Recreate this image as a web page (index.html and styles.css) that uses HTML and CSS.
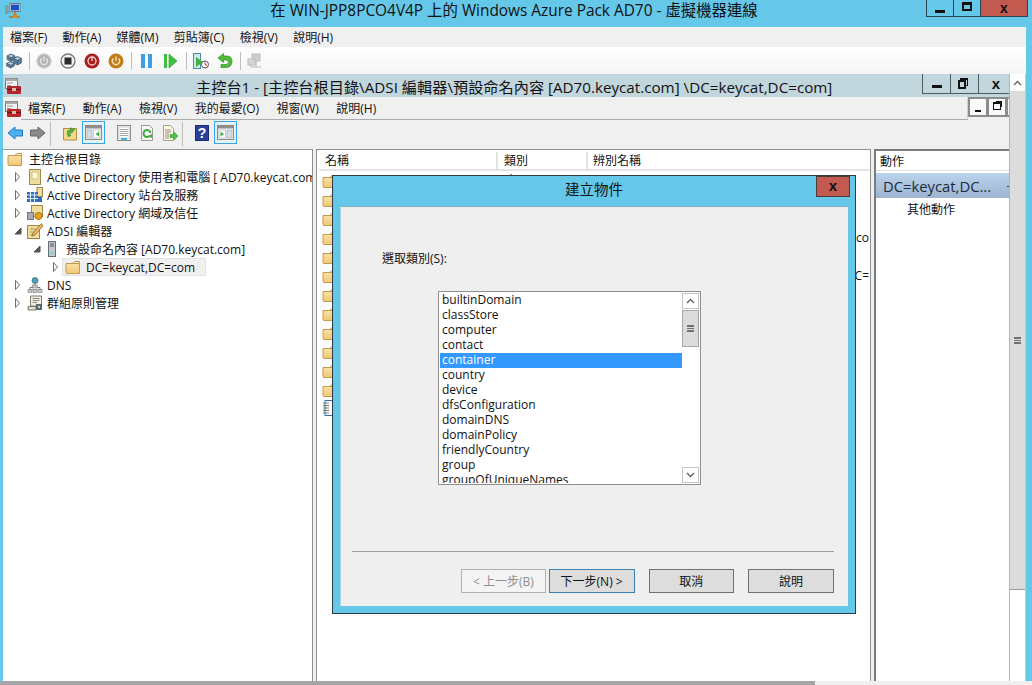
FILE: index.html
```html
<!DOCTYPE html>
<html lang="zh-Hant">
  <head>
    <meta charset="UTF-8" />
    <title>虛擬機器連線</title>
    <link rel="stylesheet" href="styles.css">
  </head>
  <body>
    <svg class="defs" width="0" height="0">
      <defs>
        <linearGradient id="folderfill" x1="0" y1="0" x2="0" y2="1">
          <stop offset="0" stop-color="#fbe6ac"/>
          <stop offset="1" stop-color="#f0c873"/>
        </linearGradient>
        <symbol id="folder" viewBox="0 0 16 14">
          <path d="M1 3.5 L1 12.5 Q1 13.5 2 13.5 L14.500 13.500 L14.500 1.500 L10 1.500 L8 3.500 Z" fill="url(#folderfill)" stroke="#c49a4e"/>
          <path d="M10 1.500 L14.500 1.500 L14.500 3.500 L8 3.500 Z" fill="#fff4d2" stroke="#c49a4e"/>
        </symbol>
        <symbol id="arrow-closed" viewBox="0 0 8 10">
          <path d="M1.500 .5 L5.500 5 L1.500 9.500 Z" fill="#fff" stroke="#6e6e6e"/>
        </symbol>
        <symbol id="arrow-open" viewBox="0 0 8 8">
          <path d="M7 1 L7 7 L1 7 Z" fill="#555" stroke="#555"/>
        </symbol>
        <symbol id="toolbox" viewBox="0 0 17 16">
          <rect x="1.500" y=".5" width="12" height="10" fill="#f3f3f3" stroke="#777"/>
          <rect x="1.500" y=".5" width="12" height="2.500" fill="#a9a9a9"/>
          <rect x="3" y="4.500" width="6" height="1" fill="#999"/>
          <rect x="3" y="7" width="4" height="1" fill="#999"/>
          <rect x="3" y="8" width="14" height="8" rx="1" fill="#b5262b"/>
          <rect x="3" y="11" width="14" height="1" fill="#6f1014"/>
          <rect x="8" y="10" width="4" height="3" fill="#e9b9a8"/>
        </symbol>
        <symbol id="chev-up" viewBox="0 0 9 6">
          <path d="M1 5 L4.500 1.500 L8 5" fill="none" stroke="#606060" stroke-width="1.300"/>
        </symbol>
        <symbol id="chev-down" viewBox="0 0 9 6">
          <path d="M1 1 L4.500 4.500 L8 1" fill="none" stroke="#606060" stroke-width="1.300"/>
        </symbol>
      </defs>
    </svg>

    <div class="vm">
      <header class="vm-title">
        <svg class="vm-icon" width="16" height="16" viewBox="0 0 16 16">
          <rect x="5" y=".5" width="10" height="8" fill="#fff" stroke="#777"/>
          <rect x="6" y="1.500" width="8" height="6" fill="#1b4fc4"/>
          <rect x="0" y="3" width="3" height="7" fill="#8aa" stroke="#667" stroke-width=".5"/>
          <path d="M10 9 V12 M4 14 H15 M10 12 V14" stroke="#b8741c" stroke-width="1.500"/>
          <rect x="8" y="11" width="4" height="4" fill="#d58a24"/>
        </svg>
        <div class="vm-caption">在 WIN-JPP8PCO4V4P 上的 Windows Azure Pack AD70 - 虛擬機器連線</div>
        <div class="win-buttons">
          <div class="win-btn win-min"><span class="glyph-min"></span></div>
          <div class="win-btn win-max"><span class="glyph-max"></span></div>
          <div class="win-btn win-close">x</div>
        </div>
      </header>

      <div class="vm-body">
        <nav class="menu vm-menu">
          <span>檔案(F)</span><span>動作(A)</span><span>媒體(M)</span><span>剪貼簿(C)</span><span>檢視(V)</span><span>說明(H)</span>
        </nav>

        <div class="vm-tools">
          <svg class="tool" width="16" height="16" viewBox="0 0 16 16">
            <path d="M5 1 L9 3 L5 5 L1 3 Z" fill="#b9ccd8" stroke="#3f5f78"/>
            <path d="M1 3 V6.500 L5 8.500 V5 Z M9 3 V6.500 L5 8.500 V5 Z" fill="#5c7d96" stroke="#3f5f78" stroke-width=".6"/>
            <path d="M11.500 3.500 L15.500 5.500 L11.500 7.500 L7.500 5.500 Z" fill="#b9ccd8" stroke="#3f5f78"/>
            <path d="M7.500 5.500 V10 L11.500 12 V7.500 Z M15.500 5.500 V10 L11.500 12 V7.500 Z" fill="#5c7d96" stroke="#3f5f78" stroke-width=".6"/>
            <path d="M4.500 8.500 L8.500 10.500 L4.500 12.500 L.5 10.500 Z" fill="#b9ccd8" stroke="#3f5f78"/>
            <path d="M.5 10.500 V13 L4.500 15 V12.500 Z M8.500 10.500 V13 L4.500 15 V12.500 Z" fill="#5c7d96" stroke="#3f5f78" stroke-width=".6"/>
          </svg>
          <i class="sep"></i>
          <svg class="tool" width="16" height="16" viewBox="0 0 16 16">
            <circle cx="8" cy="8" r="7.500" fill="#b4b4b4"/>
            <circle cx="8" cy="8" r="7" fill="none" stroke="#d8d8d8"/>
            <path d="M5.600 5.500 A3.500 3.500 0 1 0 10.400 5.500 M8 3.500 V8" fill="none" stroke="#e8e8e8" stroke-width="1.300"/>
          </svg>
          <svg class="tool" width="16" height="16" viewBox="0 0 16 16">
            <circle cx="8" cy="8" r="7" fill="#f2f2f2" stroke="#777" stroke-width="1.300"/>
            <rect x="4.500" y="4.500" width="7" height="7" fill="#2a2a2a"/>
          </svg>
          <svg class="tool" width="16" height="16" viewBox="0 0 16 16">
            <circle cx="8" cy="8" r="7.500" fill="#ac1d1d"/>
            <circle cx="8" cy="8" r="4" fill="none" stroke="#f4d5d5" stroke-width="1.300"/>
            <path d="M8 3.500 V8" stroke="#f4d5d5" stroke-width="1.300"/>
          </svg>
          <svg class="tool" width="16" height="16" viewBox="0 0 16 16">
            <circle cx="8" cy="8" r="7.500" fill="#c27d18"/>
            <path d="M5.400 5.500 A3.600 3.600 0 1 0 10.600 5.500 M8 3.500 V8" fill="none" stroke="#fbe9c4" stroke-width="1.300"/>
          </svg>
          <i class="sep"></i>
          <svg class="tool" width="16" height="16" viewBox="0 0 16 16">
            <rect x="3" y="1" width="4" height="14" fill="#3d9fe0"/>
            <rect x="10" y="1" width="4" height="14" fill="#3d9fe0"/>
          </svg>
          <svg class="tool" width="17" height="16" viewBox="0 0 17 16">
            <rect x="2" y="1" width="3" height="14" fill="#3cc03c"/>
            <path d="M7 1 L15 8 L7 15 Z" fill="#3cc03c" stroke="#2a9c2a" stroke-width=".6"/>
          </svg>
          <i class="sep"></i>
          <svg class="tool" width="16" height="16" viewBox="0 0 16 16">
            <rect x=".5" y=".5" width="7" height="15" fill="#cfe6ee" stroke="#4a8ea5"/>
            <path d="M3 4 L10 9 L3 14 Z" fill="#3cb43c"/>
            <circle cx="12" cy="11.500" r="3.500" fill="#fff" stroke="#555"/>
            <path d="M12 9.500 V11.500 L14 12.500" fill="none" stroke="#b52020"/>
          </svg>
          <svg class="tool" width="16" height="16" viewBox="0 0 16 16">
            <path d="M1 5 L6.500 .5 V3 H10 Q15.500 3.500 15 9 Q14.500 14.500 8.500 14.500 H4 V11.500 H9 Q11.500 11.500 11.500 9 Q11.500 7 9 7 H6.500 V9.500 Z" fill="#4fbf3a" stroke="#2c8f22" stroke-width=".7"/>
          </svg>
          <i class="sep"></i>
          <svg class="tool" width="16" height="16" viewBox="0 0 16 16" opacity=".55">
            <rect x="5" y="1" width="8" height="7" fill="#aaa" stroke="#888"/>
            <rect x="1" y="6" width="7" height="6" fill="#bbb" stroke="#888"/>
            <path d="M4 12 V14 H14 M9 8 V14" stroke="#888" fill="none"/>
          </svg>
        </div>

        <div class="console-row">
          <div class="console">
            <div class="console-title">
              <svg class="console-icon" width="17" height="16"><use href="#toolbox"/></svg>
              <div class="console-caption">主控台1 - [主控台根目錄\ADSI 編輯器\預設命名內容 [AD70.keycat.com] \DC=keycat,DC=com]</div>
              <div class="win-buttons console-buttons">
                <div class="win-btn win-min"><span class="glyph-min"></span></div>
                <div class="win-btn win-restore"><span class="glyph-back"></span><span class="glyph-front"></span></div>
                <div class="win-btn win-x">x</div>
              </div>
            </div>

            <div class="console-menu">
              <svg class="console-icon" width="17" height="16"><use href="#toolbox"/></svg>
              <nav class="menu inner-menu">
                <span>檔案(F)</span><span>動作(A)</span><span>檢視(V)</span><span>我的最愛(O)</span><span>視窗(W)</span><span>說明(H)</span>
              </nav>
              <div class="mdi-buttons">
                <div class="mdi-btn"><span class="mdi-min"></span></div>
                <div class="mdi-btn"><span class="mdi-restore"></span></div>
                <div class="mdi-btn"></div>
              </div>
            </div>

            <div class="console-tools">
              <div class="tool-group">
                <svg width="16" height="16" viewBox="0 0 16 16">
                  <path d="M1 8 L8 2 V5 H15.500 V11 H8 V14 Z" fill="#4eb1ee" stroke="#1d7cc4"/>
                </svg>
                <svg width="16" height="16" viewBox="0 0 16 16">
                  <path d="M15 8 L8 2 V5 H.5 V11 H8 V14 Z" fill="#8b8b8b" stroke="#666"/>
                </svg>
              </div>
              <i class="sep tool-sep"></i>
              <div class="tool-group tight">
                <svg width="16" height="16" viewBox="0 0 16 16">
                  <path d="M1.500 3.500 H14.500 V15 H1.500 Z" fill="#f3d98e" stroke="#b28f3e"/>
                  <path d="M5 11 V7 Q5 5 7 5 H9 V3 L13 5.500 L9 8.500 V7 H7.500 V11 Z" transform="rotate(-12 8 6)" fill="#55b847" stroke="#2e8c25" stroke-width=".6"/>
                </svg>
                <div class="tool-box">
                  <svg width="17" height="15" viewBox="0 0 17 15">
                    <rect x=".5" y=".5" width="16" height="14" fill="#f7f7f7" stroke="#8a8a8a"/>
                    <rect x="1" y="1" width="15" height="2.500" fill="#8e8e8e"/>
                    <rect x="2" y="5" width="5" height="8" fill="#d5dde4" stroke="#999" stroke-width=".5"/>
                    <rect x="8.500" y="5" width="6.500" height="8" fill="#fff" stroke="#999" stroke-width=".5"/>
                    <path d="M14 6.500 V11.500 L10.500 9 Z" fill="#3bb24a"/>
                  </svg>
                </div>
              </div>
              <div class="tool-group pages">
                <svg width="16" height="16" viewBox="0 0 16 16">
                  <rect x="1.500" y=".5" width="13" height="15" fill="#f4f4f4" stroke="#8c8c8c"/>
                  <rect x="3" y="2" width="10" height="11" fill="#fff" stroke="#aeb6bc" stroke-width=".6"/>
                  <path d="M4 4.500 H12 M4 6.500 H12 M4 8.500 H12 M4 10.500 H12" stroke="#a5a5a5"/>
                  <rect x="5" y="13" width="6" height="2" fill="#3fb4e6"/>
                </svg>
                <svg width="16" height="16" viewBox="0 0 16 16">
                  <path d="M2.500 .5 H10.500 L13.500 3.500 V15.500 H2.500 Z" fill="#f7f7f7" stroke="#9a9a9a"/>
                  <path d="M11.500 8 A3.500 3.500 0 1 0 10.500 11" fill="none" stroke="#3fa93f" stroke-width="2"/>
                  <path d="M9 11 L13 9 L13 13 Z" fill="#3fa93f"/>
                </svg>
                <svg width="16" height="16" viewBox="0 0 16 16">
                  <path d="M1.500 .5 H8.500 L11.500 3.500 V15.500 H1.500 Z" fill="#fbf6dc" stroke="#a2a08e"/>
                  <path d="M3 5 H9 M3 7 H9 M3 9 H7 M3 11 H7 M3 13 H7" stroke="#8f8f8f"/>
                  <path d="M8 9.500 H12 V7 L16 11 L12 15 V12.500 H8 Z" fill="#57c04c" stroke="#339128" stroke-width=".5"/>
                </svg>
              </div>
              <i class="sep tool-sep"></i>
              <div class="tool-group tight">
                <svg width="16" height="16" viewBox="0 0 16 16">
                  <rect x="1.500" y=".5" width="13" height="15" fill="#2b3f9b" stroke="#1c2b70"/>
                  <text class="help-mark" x="8" y="13" text-anchor="middle">?</text>
                </svg>
                <div class="tool-box">
                  <svg width="17" height="15" viewBox="0 0 17 15">
                    <rect x=".5" y=".5" width="16" height="14" fill="#f7f7f7" stroke="#8a8a8a"/>
                    <rect x="1" y="1" width="15" height="2.500" fill="#8e8e8e"/>
                    <rect x="2" y="5" width="6.500" height="8" fill="#fff" stroke="#999" stroke-width=".5"/>
                    <rect x="10" y="5" width="5" height="8" fill="#d5dde4" stroke="#999" stroke-width=".5"/>
                    <path d="M3.500 6.500 V11.500 L7 9 Z" fill="#3bb24a"/>
                  </svg>
                </div>
              </div>
            </div>

            <div class="panes">
              <aside class="tree">
                <div class="node">
                  <svg class="node-icon root-icon" width="16" height="14"><use href="#folder"/></svg>
                  <span class="root-label">主控台根目錄</span>
                </div>
                <div class="node">
                  <svg class="twisty" width="8" height="10"><use href="#arrow-closed"/></svg>
                  <svg class="node-icon" width="16" height="16" viewBox="0 0 16 16">
                    <rect x="2.500" y=".5" width="11" height="15" fill="#f0dd9e" stroke="#9c8a4c"/>
                    <rect x="5" y="3" width="6" height="7" fill="#fff6d0" stroke="#b3a469" stroke-width=".6"/>
                  </svg>
                  <span>Active Directory 使用者和電腦 [ AD70.keycat.com]</span>
                </div>
                <div class="node">
                  <svg class="twisty" width="8" height="10"><use href="#arrow-closed"/></svg>
                  <svg class="node-icon" width="16" height="16" viewBox="0 0 16 16">
                    <rect x="10" y=".5" width="5.500" height="9" fill="#f0dd9e" stroke="#9c8a4c"/>
                    <rect x="0" y="5" width="11" height="10" fill="#2f6fbe"/>
                    <path d="M0 8 H11 M3.500 5 V15 M7.500 5 V15 M0 11.500 H11" stroke="#e4eef8"/>
                    <rect x="11" y="10" width="4" height="5" fill="#2f6fbe"/>
                  </svg>
                  <span>Active Directory 站台及服務</span>
                </div>
                <div class="node">
                  <svg class="twisty" width="8" height="10"><use href="#arrow-closed"/></svg>
                  <svg class="node-icon" width="16" height="16" viewBox="0 0 16 16">
                    <rect x="4.500" y=".5" width="11" height="11" fill="#f0dd9e" stroke="#9c8a4c"/>
                    <rect x="0" y="7" width="7" height="8" fill="#6d7a85"/>
                    <path d="M1 9 H6 M1 11 H6 M1 13 H6" stroke="#d5dde4"/>
                    <circle cx="11.500" cy="11" r="3.500" fill="#e3a21a" stroke="#a8720c"/>
                  </svg>
                  <span>Active Directory 網域及信任</span>
                </div>
                <div class="node">
                  <svg class="twisty" width="8" height="8"><use href="#arrow-open"/></svg>
                  <svg class="node-icon" width="16" height="16" viewBox="0 0 16 16">
                    <rect x=".5" y="2.500" width="12" height="13" fill="#f0dd9e" stroke="#9c8a4c"/>
                    <path d="M3 6 H9 M3 9 H7 M3 12 H6" stroke="#a89a63"/>
                    <path d="M14.500 .5 L6 10 L5 13 L8 12 L16 3 Z" fill="#f5b45a" stroke="#7b5a2e" stroke-width=".7"/>
                  </svg>
                  <span>ADSI 編輯器</span>
                </div>
                <div class="node lvl1">
                  <svg class="twisty" width="8" height="8"><use href="#arrow-open"/></svg>
                  <svg class="node-icon server-icon" width="12" height="16" viewBox="0 0 12 16">
                    <rect x="2.500" y=".5" width="7" height="15" fill="#c4c8cc" stroke="#6a6f74"/>
                    <path d="M4 3 H8 M4 5 H8" stroke="#55595e"/>
                    <rect x="4" y="11" width="4" height="2" fill="#7fd0e8"/>
                  </svg>
                  <span>預設命名內容 [AD70.keycat.com]</span>
                </div>
                <div class="node lvl2">
                  <svg class="twisty" width="8" height="10"><use href="#arrow-closed"/></svg>
                  <div class="node-selected">
                    <svg width="16" height="14"><use href="#folder"/></svg>
                    <span>DC=keycat,DC=com</span>
                  </div>
                </div>
                <div class="node">
                  <svg class="twisty" width="8" height="10"><use href="#arrow-closed"/></svg>
                  <svg class="node-icon" width="16" height="16" viewBox="0 0 16 16">
                    <circle cx="8" cy="3.500" r="3" fill="#4c9ad8" stroke="#2d7a3a" stroke-width=".7"/>
                    <path d="M8 6.500 V9 M3 13 V10.500 H13 V13" fill="none" stroke="#777"/>
                    <rect x="5.500" y="8" width="5" height="3" fill="#c8ccd0" stroke="#777" stroke-width=".6"/>
                    <rect x="1" y="12.500" width="4" height="3" fill="#c8ccd0" stroke="#777" stroke-width=".6"/>
                    <rect x="6" y="12.500" width="4" height="3" fill="#c8ccd0" stroke="#777" stroke-width=".6"/>
                    <rect x="11" y="12.500" width="4" height="3" fill="#c8ccd0" stroke="#777" stroke-width=".6"/>
                  </svg>
                  <span>DNS</span>
                </div>
                <div class="node">
                  <svg class="twisty" width="8" height="10"><use href="#arrow-closed"/></svg>
                  <svg class="node-icon" width="16" height="16" viewBox="0 0 16 16">
                    <path d="M3.500 1 H14.500 V11 H3.500 Z" fill="#f1efe6" stroke="#7d7a6c"/>
                    <path d="M5.500 3.500 H12.500 M5.500 5.500 H12.500 M5.500 7.500 H10" stroke="#8b887a"/>
                    <path d="M1 11.500 H9 V15 H1 Z" fill="#e0dccc" stroke="#7d7a6c"/>
                    <rect x="9" y="9" width="6" height="6" fill="#5c6770"/>
                    <rect x="11" y="11" width="2" height="2" fill="#d0d4d8"/>
                  </svg>
                  <span>群組原則管理</span>
                </div>
              </aside>

              <main class="results">
                <div class="col-head">
                  <div class="col col-name">名稱</div>
                  <div class="col col-type">類別</div>
                  <div class="col col-dn">辨別名稱</div>
                </div>
                <div class="row"><svg width="16" height="14"><use href="#folder"/></svg><span class="cell-type first">容器</span></div>
                <div class="row"><svg width="16" height="14"><use href="#folder"/></svg></div>
                <div class="row"><svg width="16" height="14"><use href="#folder"/></svg></div>
                <div class="row"><svg width="16" height="14"><use href="#folder"/></svg><span class="cell-dn">co</span></div>
                <div class="row"><svg width="16" height="14"><use href="#folder"/></svg></div>
                <div class="row"><svg width="16" height="14"><use href="#folder"/></svg><span class="cell-dn">C=</span></div>
                <div class="row"><svg width="16" height="14"><use href="#folder"/></svg></div>
                <div class="row"><svg width="16" height="14"><use href="#folder"/></svg></div>
                <div class="row"><svg width="16" height="14"><use href="#folder"/></svg></div>
                <div class="row"><svg width="16" height="14"><use href="#folder"/></svg></div>
                <div class="row"><svg width="16" height="14"><use href="#folder"/></svg></div>
                <div class="row"><svg width="16" height="14"><use href="#folder"/></svg></div>
                <div class="row row-list">
                  <svg width="16" height="16" viewBox="0 0 16 16">
                    <rect x="3" y=".5" width="12" height="15" fill="#fff" stroke="#3f66b0"/>
                    <path d="M1 3 H7 M1 5.500 H7 M1 8 H7 M1 10.500 H7 M1 13 H7" stroke="#777" stroke-width="1.200"/>
                  </svg>
                </div>
              </main>

              <aside class="actions">
                <div class="actions-head">動作</div>
                <div class="actions-band"><span>DC=keycat,DC...</span><i class="band-arrow"></i></div>
                <div class="actions-item">其他動作</div>
              </aside>
            </div>
          </div>

          <div class="vscroll">
            <div class="vscroll-up"><svg width="9" height="6"><use href="#chev-up"/></svg></div>
            <div class="vscroll-thumb"><span class="grip"></span></div>
          </div>
        </div>
      </div>

      <div class="hscroll"><div class="hscroll-thumb"></div></div>

      <section class="dialog">
        <div class="dialog-title">
          建立物件
          <div class="dialog-close">x</div>
        </div>
        <div class="dialog-body">
          <label class="pick-label">選取類別(S):</label>
          <div class="listbox">
            <ul class="listbox-items">
              <li>builtinDomain</li>
              <li>classStore</li>
              <li>computer</li>
              <li>contact</li>
              <li class="selected">container</li>
              <li>country</li>
              <li>device</li>
              <li>dfsConfiguration</li>
              <li>domainDNS</li>
              <li>domainPolicy</li>
              <li>friendlyCountry</li>
              <li>group</li>
              <li>groupOfUniqueNames</li>
            </ul>
            <div class="list-scroll">
              <div class="list-btn"><svg width="9" height="6"><use href="#chev-up"/></svg></div>
              <div class="list-thumb"><span class="grip"></span></div>
              <div class="list-track"></div>
              <div class="list-btn"><svg width="9" height="6"><use href="#chev-down"/></svg></div>
            </div>
          </div>
          <hr class="dialog-rule">
          <div class="dialog-buttons">
            <button class="btn btn-off">&lt; 上一步(B)</button>
            <button class="btn btn-default">下一步(N) &gt;</button>
            <button class="btn btn-cancel">取消</button>
            <button class="btn btn-help">說明</button>
          </div>
        </div>
      </section>
    </div>
  </body>
</html>
```

FILE: styles.css
```css
* {
  box-sizing: border-box;
}

html, body {
  margin: 0;
  height: 100%;
  background: #fff;
}

body {
  font-family: "Open Sans", "Noto Sans CJK TC", sans-serif;
  font-size: 12px;
  color: #111;
}

svg {
  display: block;
  flex: none;
}

.defs {
  position: absolute;
}

.vm {
  position: relative;
  width: 1032px;
  height: 685px;
  overflow: hidden;
  display: flex;
  flex-direction: column;
  background: #65c8e9;
}

/* outer window */
.vm-title {
  height: 27px;
  flex: none;
  display: flex;
  align-items: flex-start;
  padding: 3px 4px 0 5px;
}

.vm-caption {
  flex: 1;
  margin-top: 1px;
  text-align: center;
  font-size: 15.400px;
  line-height: 14px;
  padding: 0 0 0 81px;
  white-space: nowrap;
}

.win-buttons {
  display: flex;
  height: 17px;
  margin-top: -3px;
  border: 1px solid #2f4450;
  border-top: 0;
}

.win-btn {
  display: flex;
  align-items: center;
  justify-content: center;
  width: 27px;
  border-right: 1px solid #2f4450;
  font-weight: 800;
  font-size: 14px;
  line-height: 14px;
  font-family: "Liberation Sans", sans-serif;
}

.win-btn:last-child {
  border-right: 0;
}

.win-close {
  width: 46px;
  background: #c25a50;
}

.glyph-min {
  width: 10px;
  height: 3px;
  margin-top: 6px;
  background: #111;
}

.glyph-max {
  width: 10px;
  height: 9px;
  margin-top: -3px;
  border: 2px solid #111;
  border-top-width: 3px;
}

.vm-body {
  flex: 1;
  min-height: 0;
  margin: 0 6px 0 3px;
  display: flex;
  flex-direction: column;
}

.menu {
  display: flex;
  white-space: nowrap;
}

.vm-menu {
  height: 20px;
  flex: none;
  align-items: center;
  gap: 15.300px;
  padding-left: 7px;
  background: #f0f0f0;
}

.vm-tools {
  height: 27px;
  flex: none;
  display: flex;
  align-items: center;
  padding-left: 3px;
  background: linear-gradient(#fff, #f5f5f5);
}

.tool {
  margin-right: 8px;
}

.sep {
  display: block;
  width: 1px;
  height: 18px;
  margin: 0 6px 0 -1px;
  background: #bdbdbd;
}

/* console window */
.console-row {
  flex: 1;
  min-height: 0;
  display: flex;
}

.console {
  flex: 1;
  min-width: 0;
  display: flex;
  flex-direction: column;
  background: #f0f0f0;
}

.console-title {
  position: relative;
  height: 23px;
  flex: none;
  display: flex;
  align-items: center;
  padding-left: 1px;
  background: #c2d6dd;
}

.console-caption {
  flex: 1;
  font-size: 15.200px;
  padding-left: 175px;
  white-space: nowrap;
}

.console-buttons {
  position: absolute;
  top: 0;
  right: 0;
  height: 20px;
  margin: 0;
  width: 87px;
  border-color: #4f5a60;
  border-right: 0;
}

.console-buttons .win-btn {
  width: 28px;
  border-color: #4f5a60;
}

.console-buttons .win-x {
  flex: 1;
  padding-left: 4px;
  font-size: 15px;
}

.win-restore {
  position: relative;
}

.glyph-back {
  position: absolute;
  left: 9px;
  top: 4px;
  width: 8px;
  height: 8px;
  border: 1px solid #111;
  border-top-width: 2px;
}

.glyph-front {
  position: absolute;
  left: 7px;
  top: 6px;
  width: 8px;
  height: 9px;
  background: #c2d6dd;
  border: 2px solid #111;
}

.console-menu {
  height: 23px;
  flex: none;
  display: flex;
  align-items: center;
  padding-left: 1px;
  position: relative;
}

.inner-menu {
  flex: 1;
  height: 100%;
  align-items: center;
  gap: 17.500px;
  padding-left: 7px;
  margin-right: 41px;
  border-bottom: 1px solid #acacac;
  border-right: 1px solid #d0d0d0;
}

.mdi-buttons {
  position: absolute;
  right: 0;
  top: 0;
  width: 41px;
  height: 20px;
  display: flex;
  overflow: hidden;
}

.mdi-btn {
  width: 20px;
  height: 20px;
  flex: none;
  border: 2px solid #8c8c8c;
  margin-right: -1px;
  background: #fafafa;
  position: relative;
}

.mdi-min {
  position: absolute;
  left: 5px;
  bottom: 3px;
  width: 6px;
  height: 2px;
  background: #111;
}

.mdi-restore {
  position: absolute;
  left: 4px;
  top: 3px;
  width: 8px;
  height: 8px;
  border: 1px solid #111;
  border-top-width: 2px;
  box-shadow: 2px -2px 0 -1px #111;
}

.console-tools {
  height: 29px;
  flex: none;
  display: flex;
  align-items: flex-start;
  padding: 4px 0 0 4px;
  position: relative;
}

.console-tools > .tool-group > svg {
  margin-top: 1px;
}

.tool-group {
  display: flex;
  gap: 7px;
}

.tool-group.tight {
  gap: 4px;
}

.tool-group.pages {
  margin-left: 11px;
}

.tool-sep {
  height: 24px;
  margin: -2px 11px 0 4px;
}

.tool-box {
  width: 23px;
  height: 23px;
  margin-top: -3px;
  display: flex;
  align-items: center;
  justify-content: center;
  background: #e3f1fb;
  border: 1px solid #3ba5e0;
}

.help-mark {
  font-family: "Liberation Sans", sans-serif;
  font-weight: 700;
  font-size: 14px;
  fill: #fff;
}

/* panes */
.panes {
  flex: 1;
  min-height: 0;
  display: flex;
}

.tree {
  width: 310px;
  flex: none;
  overflow: hidden;
  background: #fff;
  border-top: 1px solid #9b9b9b;
  border-right: 1px solid #8f8f8f;
}

.node {
  height: 18px;
  display: flex;
  align-items: center;
  padding-left: 11px;
  white-space: nowrap;
}

.twisty {
  margin-right: 5px;
}

.node-icon {
  margin-right: 4px;
}

.root-icon {
  margin-left: -7px;
}

.root-label {
  margin-left: 2px;
}

.node.lvl1 {
  padding-left: 30px;
}

.server-icon {
  margin-right: 8px;
}

.node.lvl2 {
  padding-left: 49px;
}

.node.lvl2 .twisty {
  margin-right: 2px;
}

.node-selected {
  width: 144px;
  height: 18px;
  display: flex;
  align-items: center;
  gap: 5px;
  padding-left: 2px;
  background: #f0f0f0;
  border: 1px solid #e2e2e2;
}

.results {
  width: 555px;
  flex: none;
  margin-left: 3px;
  overflow: hidden;
  padding: 2px 0 0 0;
  background: #fff;
  border-top: 1px solid #8f8f8f;
  border-left: 1px solid #8f8f8f;
  border-right: 1px solid #8f8f8f;
}

.col-head {
  height: 19px;
  display: flex;
  margin-left: 2px;
  border: 1px solid #e4e4e4;
  border-left: 0;
  border-width: 0 0 2px;
}

.col {
  line-height: 17px;
  padding-left: 6px;
  border-right: 2px solid #e4e4e4;
}

.col-name {
  width: 179px;
}

.col-type {
  width: 90px;
}

.col-dn {
  flex: 1;
  padding-left: 5px;
  border-right: 0;
}

.row {
  height: 19px;
  display: flex;
  align-items: center;
  gap: 4px;
  padding-left: 5px;
  position: relative;
}

.row-list svg {
  margin-top: -2px;
}

.cell-type.first {
  position: absolute;
  left: 188px;
  top: 0;
  font-size: 12px;
}

.cell-dn {
  position: absolute;
  right: 1px;
}

.actions {
  flex: 1;
  margin-left: 3px;
  min-width: 0;
  background: #fff;
  overflow: hidden;
  padding-top: 2px;
  border-top: 2px solid #7c7c7c;
  border-left: 2px solid #7c7c7c;
}

.actions-head {
  height: 18px;
  line-height: 17px;
  padding-left: 4px;
  border-bottom: 1px solid #e0e0e0;
}

.actions-band {
  height: 25px;
  margin-top: 2px;
  display: flex;
  align-items: center;
  justify-content: space-between;
  padding-left: 7px;
  font-size: 14.800px;
  white-space: nowrap;
  color: #1b2b3d;
  background: linear-gradient(#bbd3ec, #9db4d0);
}

.band-arrow {
  width: 1px;
  height: 1px;
  margin-top: 2px;
  background: #334;
  box-shadow: -1px 0 0 #334;
}

.actions-item {
  padding: 2px 0 0 31px;
}

.vscroll {
  width: 17px;
  flex: none;
  background: #fff;
  border-left: 1px solid #b4b4b4;
  border-right: 1px solid #c9c9c9;
}

.vscroll-up {
  height: 17px;
  display: flex;
  align-items: center;
  justify-content: center;
}

.vscroll-thumb {
  height: 499px;
  display: flex;
  align-items: center;
  justify-content: center;
  background: #dcdcdc;
  border-bottom: 1px solid #9a9a9a;
}

.grip {
  display: block;
  width: 7px;
  height: 7px;
  background: linear-gradient(#707070 0 2px, transparent 2px 3px, #707070 3px 4px, transparent 4px 5px, #707070 5px 7px);
}

.hscroll {
  height: 4px;
  flex: none;
  background: #f0f0f0;
}

.hscroll-thumb {
  width: 815px;
  height: 100%;
  background: #a5a5a5;
}

/* create object dialog */
.dialog {
  position: absolute;
  left: 332px;
  top: 175px;
  width: 524px;
  height: 439px;
  display: flex;
  flex-direction: column;
  padding: 0 7px 7px;
  background: #65c8e9;
  border: 1px solid #2e3b42;
}

.dialog-title {
  position: relative;
  height: 30px;
  flex: none;
  text-align: center;
  font-size: 14.500px;
  line-height: 28px;
}

.dialog-close {
  position: absolute;
  top: 0;
  right: -2px;
  width: 34px;
  height: 21px;
  line-height: 17px;
  font-family: "Liberation Sans", sans-serif;
  font-size: 15px;
  font-weight: 800;
  background: #c25a50;
  border: 1px solid #4a3a38;
}

.dialog-body {
  flex: 1;
  min-height: 0;
  display: flex;
  flex-direction: column;
  padding: 43px 14px 0 11px;
  background: #efefef;
  border-top: 1px solid #7fb2cb;
  border-left: 1px solid #a9d4e6;
}

.pick-label {
  height: 17px;
  line-height: 17px;
  margin-left: 30px;
}

.listbox {
  width: 263px;
  height: 194px;
  margin: 24px 0 0 86px;
  display: flex;
  padding: 1px;
  background: #fff;
  border: 1px solid #8e8f8f;
}

.listbox-items {
  flex: 1;
  margin: 0;
  padding: 0;
  list-style: none;
  overflow: hidden;
}

.listbox-items li {
  height: 15px;
  line-height: 14px;
  padding-left: 2px;
}

.listbox-items li.selected {
  color: #fff;
  background: #3399ff;
}

.list-scroll {
  width: 17px;
  flex: none;
  display: flex;
  flex-direction: column;
}

.list-btn {
  height: 16px;
  flex: none;
  display: flex;
  align-items: center;
  justify-content: center;
  border: 1px solid #c4c4c4;
}

.list-thumb {
  height: 37px;
  flex: none;
  margin-top: 1px;
  display: flex;
  align-items: center;
  justify-content: center;
  background: #dcdcdc;
  border: 1px solid #a6a6a6;
}

.list-track {
  flex: 1;
}

.dialog-rule {
  margin: 66px 0 0 0;
  border: 0;
  height: 1px;
  background: #a0a0a0;
}

.dialog-buttons {
  display: flex;
  margin: 17px 0 0 109px;
}

.btn {
  width: 86px;
  height: 24px;
  padding: 0;
  font: inherit;
  color: #111;
  background: #dddddd;
  border: 1px solid #707070;
}

.btn-off {
  width: 85px;
  margin-right: 3px;
  color: #8f8f8f;
  background: #f4f4f4;
  border-color: #adb2b5;
}

.btn-default {
  border-color: #3c7fb1;
}

.btn-cancel {
  margin-left: 14px;
}

.btn-help {
  margin-left: 14px;
}
```
